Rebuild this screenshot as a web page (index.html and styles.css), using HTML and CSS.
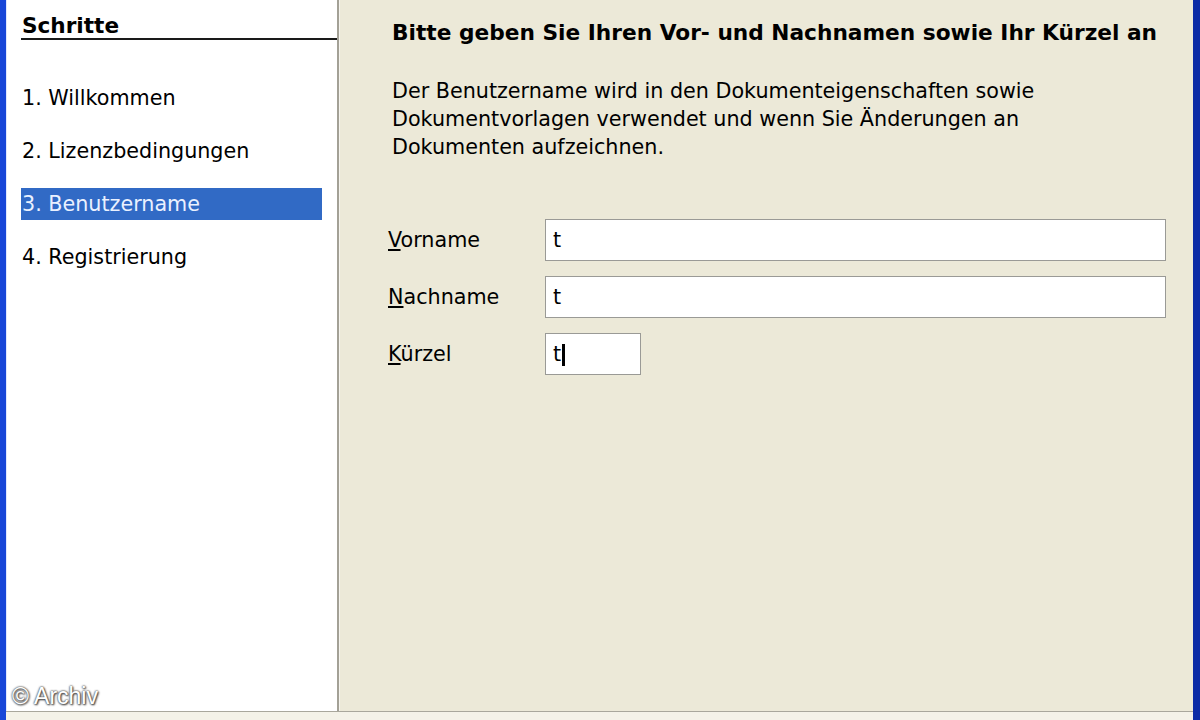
FILE: index.html
```html
<!DOCTYPE html>
<html lang="de">
  <head>
    <meta charset="UTF-8" />
    <title>Benutzername</title>
    <link rel="stylesheet" href="styles.css">
  </head>
  <body>
    <div class="window">
      <div class="dialog">
        <div class="steps">
          <div class="steps-title">Schritte</div>
          <ul class="steps-list">
            <li class="step">1. Willkommen</li>
            <li class="step">2. Lizenzbedingungen</li>
            <li class="step active">3. Benutzername</li>
            <li class="step">4. Registrierung</li>
          </ul>
        </div>

        <div class="page">
          <h1 class="page-title">Bitte geben Sie Ihren Vor- und Nachnamen sowie Ihr Kürzel an</h1>
          <p class="page-text">
            Der Benutzername wird in den Dokumenteigenschaften sowie<br />
            Dokumentvorlagen verwendet und wenn Sie Änderungen an<br />
            Dokumenten aufzeichnen.
          </p>

          <div class="form">
            <div class="form-row">
              <label class="form-label"><u>V</u>orname</label>
              <div class="field">t</div>
            </div>
            <div class="form-row">
              <label class="form-label"><u>N</u>achname</label>
              <div class="field">t</div>
            </div>
            <div class="form-row">
              <label class="form-label"><u>K</u>ürzel</label>
              <div class="field short">t<span class="caret"></span></div>
            </div>
          </div>
        </div>
      </div>
      <div class="footer"></div>
      <div class="watermark">© Archiv</div>
    </div>
  </body>
</html>
```

FILE: styles.css
```css
body {
  margin: 0;
  width: 1200px;
  height: 720px;
  overflow: hidden;
  font-family: "DejaVu Sans", Verdana, sans-serif;
  font-size: 20.7px;
  color: #000;
}

.window {
  position: relative;
  height: 720px;
  display: flex;
  flex-direction: column;
  background: #ece9d8;
  border-left: 6px solid #1746d8;
  border-right: 7px solid #0b2ba6;
  box-sizing: border-box;
}

.dialog {
  display: flex;
  height: 711px;
}

/* left column */
.steps {
  width: 333px;
  background: #fff;
  border-left: 1px solid #dfe8ff;
  border-right: 2px solid #a3a196;
  box-sizing: border-box;
  padding-top: 14px;
}

.steps-title {
  font-weight: bold;
  font-size: 21.6px;
  margin-left: 14px;
  padding-left: 1px;
  line-height: 24px;
  border-bottom: 2px solid #1a1a1a;
}

.steps-list {
  list-style: none;
  margin: 0;
  padding: 0;
  margin-top: 42px;
  display: flex;
  flex-direction: column;
  gap: 21px;
}

.step {
  margin-left: 14px;
  width: 301px;
  height: 32px;
  line-height: 32px;
  padding-left: 1px;
  box-sizing: border-box;
  white-space: nowrap;
}

.step.active {
  background: #316ac5;
  color: #eaf1ff;
}

/* right page */
.page {
  flex: 1;
  border-left: 1px solid #f6f5ee;
  padding-left: 52px;
  padding-top: 19px;
}

.page-title {
  margin: 0;
  font-size: 21.7px;
  font-weight: bold;
  line-height: 28px;
  white-space: nowrap;
}

.page-text {
  margin: 30px 0 0 0;
  line-height: 28px;
}

.form {
  margin-top: 58px;
  margin-left: -4px;
  display: flex;
  flex-direction: column;
  gap: 15px;
}

.form-row {
  display: flex;
  align-items: center;
}

.form-label {
  width: 157px;
}

.field {
  width: 621px;
  height: 42px;
  line-height: 40px;
  background: #fff;
  border: 1px solid #9a9a96;
  box-sizing: border-box;
  padding-left: 7px;
}

.field.short {
  width: 96px;
}

.caret {
  display: inline-block;
  width: 3px;
  height: 22px;
  background: #000;
  vertical-align: middle;
  margin-left: 1px;
}

.footer {
  flex: 1;
  background: #f4f2e8;
  border-top: 1px solid #a9a79c;
}

.watermark {
  position: absolute;
  left: 6px;
  bottom: 10px;
  font-family: "Liberation Sans", Arial, sans-serif;
  font-size: 23px;
  color: #fff;
  text-shadow: 0 0 2px #555, 0 0 2px #555, 1px 1px 2px #333;
}
```
